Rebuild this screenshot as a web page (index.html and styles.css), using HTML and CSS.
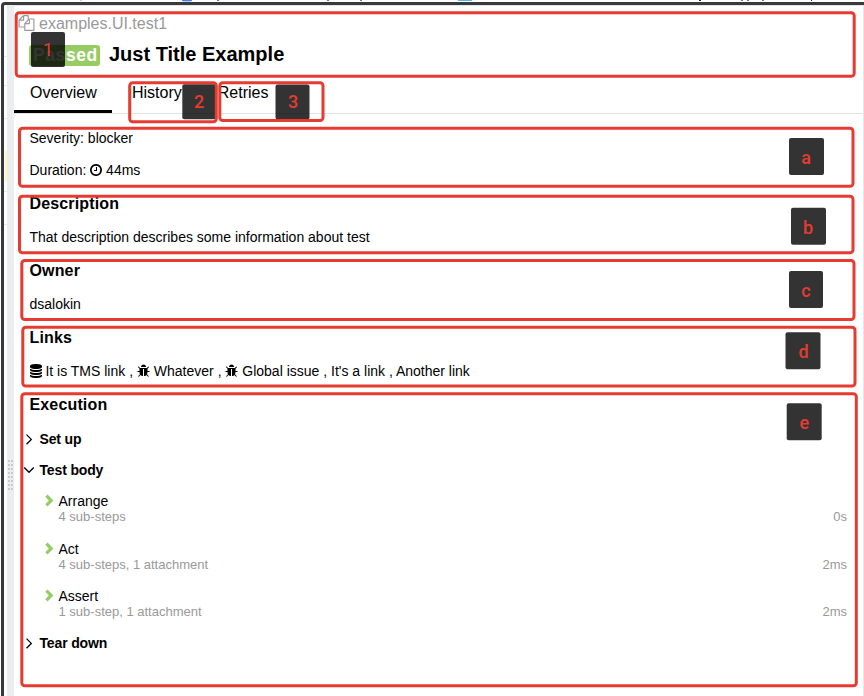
FILE: index.html
```html
<!DOCTYPE html>
<html lang="en">
<head>
<meta charset="utf-8">
<title>Just Title Example</title>
<link rel="stylesheet" href="styles.css">
</head>
<body>
<svg class="defs" width="0" height="0">
  <symbol id="copy" viewBox="0 0 1792 1792"><path d="M1696 384q40 0 68 28t28 68v1216q0 40-28 68t-68 28h-960q-40 0-68-28t-28-68v-288h-544q-40 0-68-28t-28-68v-672q0-40 20-88t48-76l408-408q28-28 76-48t88-20h416q40 0 68 28t28 68v328q68-40 128-40h416zm-544 213l-299 299h299v-299zm-640-384l-299 299h299v-299zm196 647l316-316v-416h-384v416q0 40-28 68t-68 28h-416v640h512v-256q0-40 20-88t48-76zm956 804v-1152h-384v416q0 40-28 68t-68 28h-416v640h896z"/></symbol>
  <symbol id="clock" viewBox="128 128 1536 1536"><path d="M1024 544v448q0 14-9 23t-23 9h-320q-14 0-23-9t-9-23v-64q0-14 9-23t23-9h224v-352q0-14 9-23t23-9h64q14 0 23 9t9 23zm416 352q0-148-73-273t-198-198-273-73-273 73-198 198-73 273 73 273 198 198 273 73 273-73 198-198 73-273zm224 0q0 209-103 385.5t-279.5 279.5-385.5 103-385.5-103-279.5-279.5-103-385.5 103-385.5 279.5-279.5 385.5-103 385.5 103 279.5 279.5 103 385.5z"/></symbol>
  <symbol id="database" viewBox="128 0 1536 1792"><path d="M896 768q237 0 443-43t325-127v170q0 69-103 128t-280 93.5-385 34.5-385-34.5-280-93.5-103-128v-170q119 84 325 127t443 43zm0 768q237 0 443-43t325-127v170q0 69-103 128t-280 93.5-385 34.5-385-34.5-280-93.5-103-128v-170q119 84 325 127t443 43zm0-384q237 0 443-43t325-127v170q0 69-103 128t-280 93.5-385 34.5-385-34.5-280-93.5-103-128v-170q119 84 325 127t443 43zm0-1152q208 0 385 34.5t280 93.5 103 128v128q0 69-103 128t-280 93.5-385 34.5-385-34.5-280-93.5-103-128v-128q0-69 103-128t280-93.5 385-34.5z"/></symbol>
  <symbol id="bug" viewBox="64 0 1664 1664"><path d="M1696 960q0 26-19 45t-45 19h-224q0 171-67 290l208 209q19 19 19 45t-19 45q-18 19-45 19t-45-19l-198-197q-5 5-15 13t-42 28.5-65 36.5-82 29-97 13v-896h-128v896q-51 0-101.5-13.5t-87-33-66-39-43.5-32.5l-15-14-183 207q-20 21-48 21-24 0-43-16-19-18-20.5-44.5t15.5-46.5l202-227q-58-114-58-274h-224q-26 0-45-19t-19-45 19-45 45-19h224v-294l-173-173q-19-19-19-45t19-45 45-19 45 19l173 173h844l173-173q19-19 45-19t45 19 19 45-19 45l-173 173v294h224q26 0 45 19t19 45zm-480-576h-640q0-133 93.5-226.5t226.5-93.5 226.5 93.5 93.5 226.5z"/></symbol>
</svg>
<div class="window">
  <svg class="topstrip" width="864" height="2" viewBox="0 0 864 2">
    <path fill="#4a7de8" d="M182 0h10v1h-10z"/><path fill="#b8cdf5" d="M80 0h2v1h-2zM183 1h8v1h-8z"/>
    <path fill="#55b0f5" d="M458 0h14v1h-14z"/>
    <path fill="#777" d="M217 0h2v1h-2zM327 0h2v1h-2zM360 0h2v1h-2zM741 0h2v1h-2zM747 0h2v1h-2zM762 0h2v1h-2z"/>
    <path fill="#222" d="M699 0h2v1h-2zM811 0h1v1h-1z"/>
  </svg>
  <div class="frame">
    <div class="sliver"><i></i></div>
    <div class="gutter"><div class="grip"></div></div>
    <main class="pane">
      <div class="path"><svg class="ic-copy"><use href="#copy"/></svg><span>examples.UI.test1</span></div>
      <div class="title"><span class="status">Passed</span><h1>Just Title Example</h1></div>
      <nav class="tabs"><a class="active">Overview</a><a>History</a><a>Retries</a></nav>
      <div class="body">
        <p class="severity">Severity: blocker</p>
        <p class="duration">Duration: <svg class="ic-clock"><use href="#clock"/></svg> 44ms</p>
        <section><h2>Description</h2><p>That description describes some information about test</p></section>
        <section><h2>Owner</h2><p>dsalokin</p></section>
        <section><h2>Links</h2><p><svg class="ic-db"><use href="#database"/></svg> It is TMS link , <svg class="ic-bug"><use href="#bug"/></svg> Whatever , <svg class="ic-bug"><use href="#bug"/></svg> Global issue , It's a link , Another link</p></section>
        <h2>Execution</h2>
      </div>
      <div class="tree">
        <div class="stage"><svg viewBox="0 0 12 12"><path d="M3.5 1.6 8.3 6.4 3.5 11.2"/></svg>Set up</div>
        <div class="stage"><svg viewBox="0 0 12 12"><path d="M1.2 3.5 6 8.3 10.8 3.5"/></svg>Test body</div>
        <div class="steps">
          <div class="step"><svg viewBox="0 0 10 13"><path d="M2.4 1.7 7.2 6.5 2.4 11.3"/></svg><div class="name">Arrange<small>4 sub-steps</small></div><span class="time">0s</span></div>
          <div class="step"><svg viewBox="0 0 10 13"><path d="M2.4 1.7 7.2 6.5 2.4 11.3"/></svg><div class="name">Act<small>4 sub-steps, 1 attachment</small></div><span class="time">2ms</span></div>
          <div class="step"><svg viewBox="0 0 10 13"><path d="M2.4 1.7 7.2 6.5 2.4 11.3"/></svg><div class="name">Assert<small>1 sub-step, 1 attachment</small></div><span class="time">2ms</span></div>
        </div>
        <div class="stage"><svg viewBox="0 0 12 12"><path d="M3.5 1.6 8.3 6.4 3.5 11.2"/></svg>Tear down</div>
      </div>
    </main>
  </div>
  <svg class="notes" width="864" height="696" viewBox="0 0 864 696">
    <g class="tiles">
      <rect x="31" y="32" width="34" height="35" rx="2"/>
      <rect x="182.3" y="84.3" width="34" height="35" rx="2"/>
      <rect x="275.5" y="84.5" width="34" height="35" rx="2"/>
      <rect x="789" y="138" width="35" height="37" rx="2"/>
      <rect x="791" y="207.7" width="35" height="37" rx="2"/>
      <rect x="789" y="271" width="34" height="37" rx="2"/>
      <rect x="785.5" y="332.3" width="35" height="37" rx="2"/>
      <rect x="786.7" y="403.3" width="35" height="37" rx="2"/>
    </g>
    <g class="boxes">
      <rect x="16.2" y="12.7" width="838" height="63.5" rx="3"/>
      <rect x="129.7" y="82.8" width="86.6" height="38.9" rx="3"/>
      <rect x="219.8" y="82.7" width="103.2" height="37.8" rx="3"/>
      <rect x="19.5" y="128.3" width="833.5" height="57.9" rx="3"/>
      <rect x="19.5" y="196.3" width="833.5" height="56.5" rx="3"/>
      <rect x="21.8" y="260.5" width="832.2" height="59.1" rx="3"/>
      <rect x="22.8" y="327.3" width="832.2" height="58.7" rx="3"/>
      <rect x="21.8" y="393.8" width="834.5" height="292" rx="3"/>
    </g>
    <g class="labels">
      <text class="thin" x="48" y="56">1</text>
      <text x="199" y="108">2</text>
      <text x="293" y="108">3</text>
      <text x="806" y="164">a</text>
      <text x="808" y="234">b</text>
      <text x="806" y="297">c</text>
      <text x="803.5" y="358">d</text>
      <text x="804.3" y="429">e</text>
    </g>
  </svg>
</div>
</body>
</html>
```
FILE: styles.css
```css
* { box-sizing: border-box; }
body { margin: 0; background: #fff; color: #000; font: 14px/20px "Liberation Sans", Arial, sans-serif; }
h1, h2, p { margin: 0; }
.defs { position: absolute; }
.window { position: relative; width: 864px; height: 696px; overflow: hidden; display: flex; flex-direction: column; }
.topstrip { display: block; flex: none; }
.frame { flex: 1; display: flex; margin-left: 1px; border: solid #38393a; border-width: 3px 0 0 3px; border-radius: 4px 0 0 0; }
.sliver { width: 3px; background: linear-gradient(#e8e8e8, #e8e8e8) 0 51px / 3px 1px no-repeat, linear-gradient(#e8e8e8, #e8e8e8) 0 80px / 3px 1px no-repeat, linear-gradient(#e8e8e8, #e8e8e8) 0 113px / 3px 1px no-repeat, linear-gradient(#e8e8e8, #e8e8e8) 0 186px / 3px 1px no-repeat, linear-gradient(#e8e8e8, #e8e8e8) 0 219px / 3px 1px no-repeat; padding-top: 146px; }
.sliver i { display: block; height: 30px; margin-left: 1px; background: #fff6c0; }
.gutter { width: 7px; background: #ebeef1; padding: 455px 0 0 1px; }
.grip { width: 5px; height: 30px; background: repeating-linear-gradient(transparent 0 2px, #ebeef1 2px 4px), repeating-linear-gradient(90deg, #c8cacc 0 2px, #ebeef1 2px 3px); }
.pane { flex: 1; min-width: 0; border-top: 1px solid #e4e4e4; border-right: 1px solid #e8e8e8; }
.path { display: flex; height: 20px; margin: 8px 0 0 4px; font-size: 16px; color: #999; }
.path span { margin-left: 4px; }
.ic-copy { width: 17px; height: 16px; fill: #999; margin-top: 1px; }
.title { display: flex; height: 26px; margin: 7px 0 0 15px; }
.status { width: 71px; height: 21px; margin-top: 4px; padding-left: 4px; border-radius: 3px; background: #97cc64; color: #fff; font: bold 17.5px/21px "Liberation Sans", Arial, sans-serif; letter-spacing: .6px; }
h1 { margin-left: 9px; font-size: 20px; line-height: 26px; white-space: nowrap; }
.tabs { display: flex; gap: 4px; height: 34px; margin-top: 13px; border-bottom: 1px solid #e4e4e4; font-size: 16px; line-height: 26px; }
.tabs a { height: 33px; padding: 0 16px; border-bottom: 3px solid transparent; }
.tabs .active { width: 98px; border-color: #000; }
.body { padding: 14px 0 0 15.5px; }
.duration { margin: 12px 0 14px; }
section { height: 67px; }
h2 { font-size: 16px; line-height: 20px; letter-spacing: .15px; }
section p { margin-top: 13px; }
.ic-clock { width: 12px; height: 12px; vertical-align: -1px; }
.ic-db { width: 12px; height: 14px; vertical-align: -2px; }
.ic-bug { width: 13px; height: 13px; vertical-align: -1px; }
.tree { padding: 14px 16px 0 9px; }
.stage { display: flex; align-items: center; height: 20px; margin-bottom: 11px; font-weight: bold; letter-spacing: -.15px; }
.stage svg { width: 12px; height: 12px; margin-right: 4.5px; fill: none; stroke: #000; stroke-width: 1.3; }
.steps { padding: 2px 0 0 21px; }
.step { display: flex; height: 47.6px; line-height: 16px; }
.step svg { width: 10px; height: 13px; margin-top: 1px; fill: none; stroke: #97cc64; stroke-width: 3.2; }
.name { flex: 1; margin-left: 4.5px; }
.name small { display: block; font-size: 13px; color: #999; }
.time { margin-top: 16px; font-size: 13px; color: #999; }
.steps + .stage { margin-top: -3px; }
.notes { position: absolute; left: 0; top: 0; }
.tiles rect { fill: #000; fill-opacity: .8; }
.boxes rect { fill: none; stroke: #e63b30; stroke-width: 3; }
.labels text { fill: #e63b30; font: 500 18px Roboto, sans-serif; text-anchor: middle; }
.labels .thin { font-weight: 400; }
```
